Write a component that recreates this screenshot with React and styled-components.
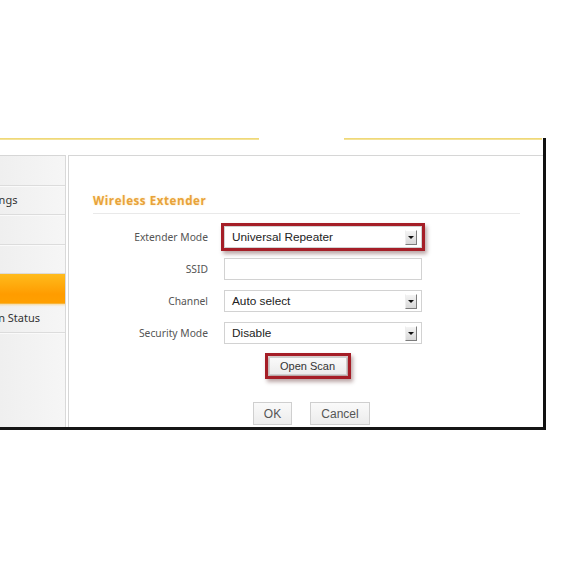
import React from "react";
import styled, { createGlobalStyle } from "styled-components";

const GlobalStyle = createGlobalStyle`
  html, body {
    margin: 0;
    padding: 0;
    background: #fff;
  }
`;

const Page = styled.div`
  padding-top: 138px;
  width: 568px;
  height: 568px;
  box-sizing: border-box;
  overflow: hidden;
`;

const Frame = styled.div`
  width: 546px;
  border-right: 3px solid #111;
  border-bottom: 3px solid #151515;
  box-sizing: border-box;
  height: 292px;
  display: flex;
  flex-direction: column;
`;

const TopRule = styled.div`
  display: flex;
  gap: 85px;
  height: 2px;
  padding-right: 1px;
`;

const RuleSegment = styled.div`
  flex: ${(p) => p.$grow};
  background: linear-gradient(to bottom, #eed468, #f5e7a8);
`;

const Body = styled.div`
  flex: 1;
  display: flex;
  padding-top: 15px;
  gap: 2px;
`;

const Sidebar = styled.div`
  width: 65px;
  overflow: hidden;
  border-top: 1px solid #d6d6d6;
  border-right: 1px solid #d9d9d9;
  background: linear-gradient(to right, #efefef, #f6f6f6);
`;

const NavList = styled.div`
  margin-left: -66px;
  width: 132px;
`;

const NavItem = styled.div`
  height: 28.5px;
  border-bottom: 1px solid ${(p) => (p.$active ? "#f7b43a" : "#dcdcdc")};
  box-shadow: ${(p) => (p.$active ? "0 1px 2px rgba(255, 190, 60, 0.5)" : "0 1px 0 #fafafa")};
  display: flex;
  align-items: center;
  padding-left: 12px;
  font-family: "Noto Sans", sans-serif;
  font-size: 11px;
  color: #333;
  white-space: nowrap;
  background: ${(p) =>
    p.$active ? "linear-gradient(to bottom, #ffbb1c, #ff9c00 70%, #ffa000)" : "transparent"};
`;

const Panel = styled.div`
  flex: 1;
  border-top: 1px solid #d6d6d6;
  border-left: 1px solid #d6d6d6;
  padding: 37px 23px 0 24px;
  background: #fff;
`;

const Heading = styled.div`
  font-family: "Open Sans", "Noto Sans", sans-serif;
  font-weight: 700;
  font-size: 11.6px;
  letter-spacing: 0.55px;
  color: #e8a33a;
  text-shadow: 0 0 2px rgba(255, 220, 150, 0.8);
  padding-bottom: 5px;
  border-bottom: 1px solid #e9e9e9;
  margin-bottom: 12px;
`;

const Form = styled.div`
  display: flex;
  flex-direction: column;
  gap: 10px;
`;

const Row = styled.div`
  display: flex;
  align-items: center;
  gap: 16px;
`;

const Label = styled.div`
  width: 115px;
  text-align: right;
  font-family: "Noto Sans", sans-serif;
  font-size: 10.3px;
  color: #555;
`;

const Field = styled.div`
  width: 198px;
  height: 22px;
  box-sizing: border-box;
  border: 1px solid #d2d2d2;
  background: #fff;
  display: flex;
  align-items: center;
  padding: 0 4px 0 7px;
  font-family: "Liberation Sans", Arial, sans-serif;
  font-size: 11.8px;
  color: #222;
  ${(p) =>
    p.$marked &&
    `
    outline: 3px solid #a51e27;
    outline-offset: 0px;
    box-shadow: 2px 3px 4px 3px rgba(60, 0, 0, 0.35);
  `}
`;

const FieldText = styled.span`
  flex: 1;
`;

const ArrowButton = styled.span`
  width: 12px;
  height: 15px;
  box-sizing: border-box;
  background: linear-gradient(to bottom, #f4f4f4, #d8d8d8);
  border: 1px solid;
  border-color: #fff #7c7c7c #7c7c7c #eee;
  display: flex;
  align-items: center;
  justify-content: center;
  &::after {
    content: "";
    border-left: 3px solid transparent;
    border-right: 3px solid transparent;
    border-top: 3px solid #111;
  }
`;

const ButtonRow = styled.div`
  display: flex;
  justify-content: center;
  gap: ${(p) => p.$gap || 0}px;
  padding-left: ${(p) => p.$shift || 0}px;
  margin-top: ${(p) => p.$top}px;
`;

const Button = styled.div`
  height: ${(p) => p.$h}px;
  width: ${(p) => p.$w}px;
  box-sizing: border-box;
  border: 1px solid #cfcfcf;
  background: linear-gradient(to bottom, #fafafa, #ececec);
  display: flex;
  align-items: center;
  justify-content: center;
  font-family: "Liberation Sans", Arial, sans-serif;
  font-size: ${(p) => p.$fs}px;
  color: ${(p) => p.$color || "#555"};
  ${(p) =>
    p.$marked &&
    `
    outline: 3px solid #a51e27;
    outline-offset: 1px;
    box-shadow: 2px 3px 4px 4px rgba(60, 0, 0, 0.35);
  `}
`;

function Select({ value, marked }) {
  return (
    <Field $marked={marked}>
      <FieldText>{value}</FieldText>
      <ArrowButton />
    </Field>
  );
}

const navItems = [
  { label: "" },
  { label: "Basic Settings" },
  { label: "" },
  { label: "" },
  { label: "", active: true },
  { label: "Connection Status" },
];

export default function App() {
  return (
    <>
      <GlobalStyle />
      <Page>
        <Frame>
          <TopRule>
            <RuleSegment $grow={258} />
            <RuleSegment $grow={198} />
          </TopRule>
          <Body>
            <Sidebar>
              <NavList>
                {navItems.map((item, i) => (
                  <NavItem key={i} $active={item.active}>
                    {item.label}
                  </NavItem>
                ))}
              </NavList>
            </Sidebar>
            <Panel>
              <Heading>Wireless Extender</Heading>
              <Form>
                <Row>
                  <Label>Extender Mode</Label>
                  <Select value="Universal Repeater" marked />
                </Row>
                <Row>
                  <Label>SSID</Label>
                  <Field />
                </Row>
                <Row>
                  <Label>Channel</Label>
                  <Select value="Auto select" />
                </Row>
                <Row>
                  <Label>Security Mode</Label>
                  <Select value="Disable" />
                </Row>
              </Form>
              <ButtonRow $top={13} $shift={2}>
                <Button $w={78} $h={18} $fs={11} $color="#333" $marked>
                  Open Scan
                </Button>
              </ButtonRow>
              <ButtonRow $top={27} $gap={18} $shift={10}>
                <Button $w={39} $h={23} $fs={12}>
                  OK
                </Button>
                <Button $w={60} $h={23} $fs={12}>
                  Cancel
                </Button>
              </ButtonRow>
            </Panel>
          </Body>
        </Frame>
      </Page>
    </>
  );
}
